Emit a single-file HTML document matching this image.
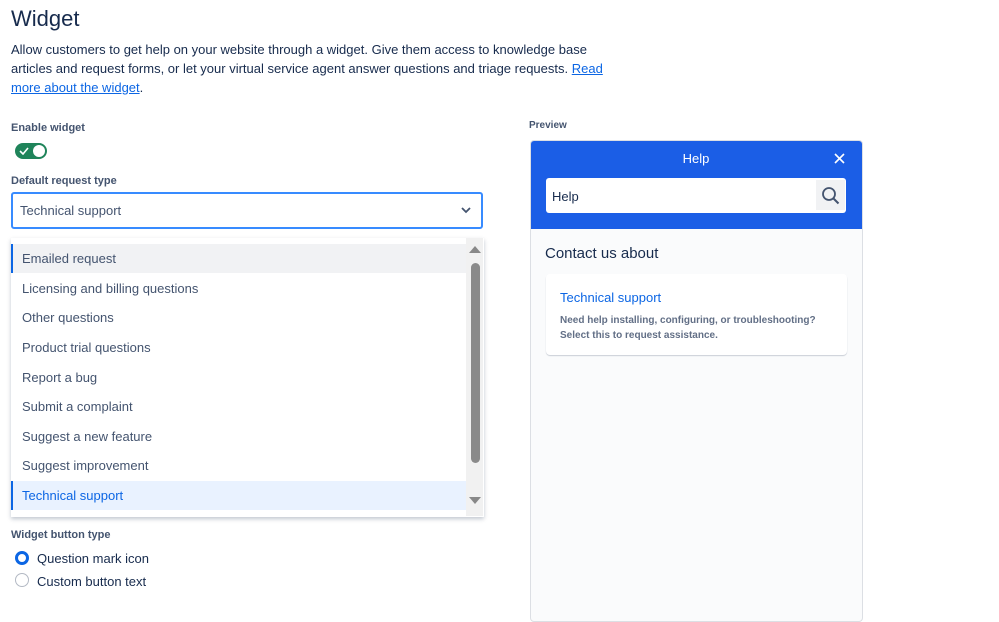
<!DOCTYPE html>
<html><head><style>
body{margin:0;width:999px;height:603px;overflow:hidden;background:#fff;font-family:"Liberation Sans",sans-serif;color:#172b4d;position:relative}
.a{position:absolute}
h1{position:absolute;left:11px;top:6px;margin:0;font-size:22px;font-weight:normal;color:#172b4d}
.p{left:11px;top:40px;font-size:13px;line-height:19px;color:#172b4d;width:615px}
.p a{color:#0c66e4;text-decoration:underline}
.lbl{font-size:11px;font-weight:bold;color:#44546f}
.item{position:absolute;left:11px;width:455px;height:29px;font-size:13px;line-height:29px;color:#44546f;padding-left:11px;box-sizing:border-box}
</style></head><body>
<h1>Widget</h1>
<div class="a p">Allow customers to get help on your website through a widget. Give them access to knowledge base articles and request forms, or let your virtual service agent answer questions and triage requests. <a>Read more about the widget</a>.</div>
<div class="a lbl" style="left:11px;top:122px">Enable widget</div>
<div class="a" style="left:15px;top:143px;width:32px;height:16px;border-radius:8px;background:#1f845a"></div>
<div class="a" style="left:33px;top:145px;width:12px;height:12px;border-radius:6px;background:#fff"></div>
<svg class="a" style="left:19px;top:147px" width="10" height="8"><path d="M1 4l3 3 5-6" stroke="#fff" stroke-width="1.6" fill="none"/></svg>
<div class="a lbl" style="left:11px;top:175px">Default request type</div>
<div class="a" style="left:11px;top:192px;width:461px;height:33px;border:2px solid #388bff;border-radius:3px;font-size:13px;line-height:33px;padding-left:7px;color:#44546f">Technical support</div>
<svg class="a" style="left:461px;top:207px" width="10" height="7"><path d="M1 1l4 4 4-4" stroke="#44546f" stroke-width="1.8" fill="none"/></svg>
<div class="a" style="left:11px;top:238px;width:473px;height:279px;background:#fff;box-shadow:0 2px 4px rgba(9,30,66,.25)"></div>
<div class="item" style="top:244px;background:#f1f2f4;border-left:2px solid #0c66e4;padding-left:9px">Emailed request</div>
<div class="item" style="top:274px">Licensing and billing questions</div>
<div class="item" style="top:303px">Other questions</div>
<div class="item" style="top:333px">Product trial questions</div>
<div class="item" style="top:363px">Report a bug</div>
<div class="item" style="top:392px">Submit a complaint</div>
<div class="item" style="top:422px">Suggest a new feature</div>
<div class="item" style="top:451px">Suggest improvement</div>
<div class="item" style="top:481px;background:#e9f2ff;color:#0c66e4;border-left:2px solid #0c66e4;padding-left:9px">Technical support</div>
<div class="a" style="left:466px;top:238px;width:17px;height:278px;background:#f1f1f1"></div>
<svg class="a" style="left:469px;top:245px" width="12" height="9"><path d="M0 8L6 1l6 7z" fill="#888"/></svg>
<svg class="a" style="left:469px;top:496px" width="12" height="9"><path d="M0 1L6 8l6-7z" fill="#888"/></svg>
<div class="a" style="left:471px;top:263px;width:9px;height:200px;border-radius:5px;background:#8a8a8a"></div>
<div class="a lbl" style="left:11px;top:529px">Widget button type</div>
<div class="a" style="left:15px;top:551px;width:8px;height:8px;border:3px solid #0c66e4;border-radius:50%;background:#fff"></div>
<div class="a" style="left:37px;top:551px;font-size:13px;color:#172b4d">Question mark icon</div>
<div class="a" style="left:15px;top:573px;width:12px;height:12px;border:1px solid #b3b9c4;border-radius:50%"></div>
<div class="a" style="left:37px;top:574px;font-size:13px;color:#172b4d">Custom button text</div>
<div class="a lbl" style="left:529px;top:120px;font-size:10px">Preview</div>
<div class="a" style="left:530px;top:140px;width:331px;height:480px;border:1px solid #dcdfe4;border-radius:4px;background:#fafbfc;overflow:hidden">
<div style="height:88px;background:#1b5ee6"></div>
</div>
<div class="a" style="left:530px;top:151px;width:332px;text-align:center;color:#fff;font-size:13px">Help</div>
<svg class="a" style="left:834px;top:153px" width="11" height="11"><path d="M1 1l9 9M10 1l-9 9" stroke="#fff" stroke-width="1.6"/></svg>
<div class="a" style="left:546px;top:178px;width:300px;height:35px;background:#fff;border-radius:3px"></div>
<div class="a" style="left:552px;top:189px;font-size:13px;color:#172b4d">Help</div>
<div class="a" style="left:816px;top:180px;width:29px;height:30px;background:#f1f2f4"></div>
<svg class="a" style="left:821px;top:186px" width="19" height="19"><circle cx="8" cy="8" r="6" stroke="#44546f" stroke-width="1.8" fill="none"/><path d="M12.5 12.5l5 5" stroke="#44546f" stroke-width="2"/></svg>
<div class="a" style="left:545px;top:245px;font-size:15px;color:#172b4d">Contact us about</div>
<div class="a" style="left:546px;top:274px;width:301px;height:81px;background:#fff;border-radius:4px;box-shadow:0 1px 1px rgba(9,30,66,.2)"></div>
<div class="a" style="left:560px;top:290px;font-size:13px;color:#0c66e4">Technical support</div>
<div class="a" style="left:560px;top:313px;font-size:10px;line-height:15px;font-weight:bold;color:#626f86;width:280px">Need help installing, configuring, or troubleshooting? Select this to request assistance.</div>
</body></html>
